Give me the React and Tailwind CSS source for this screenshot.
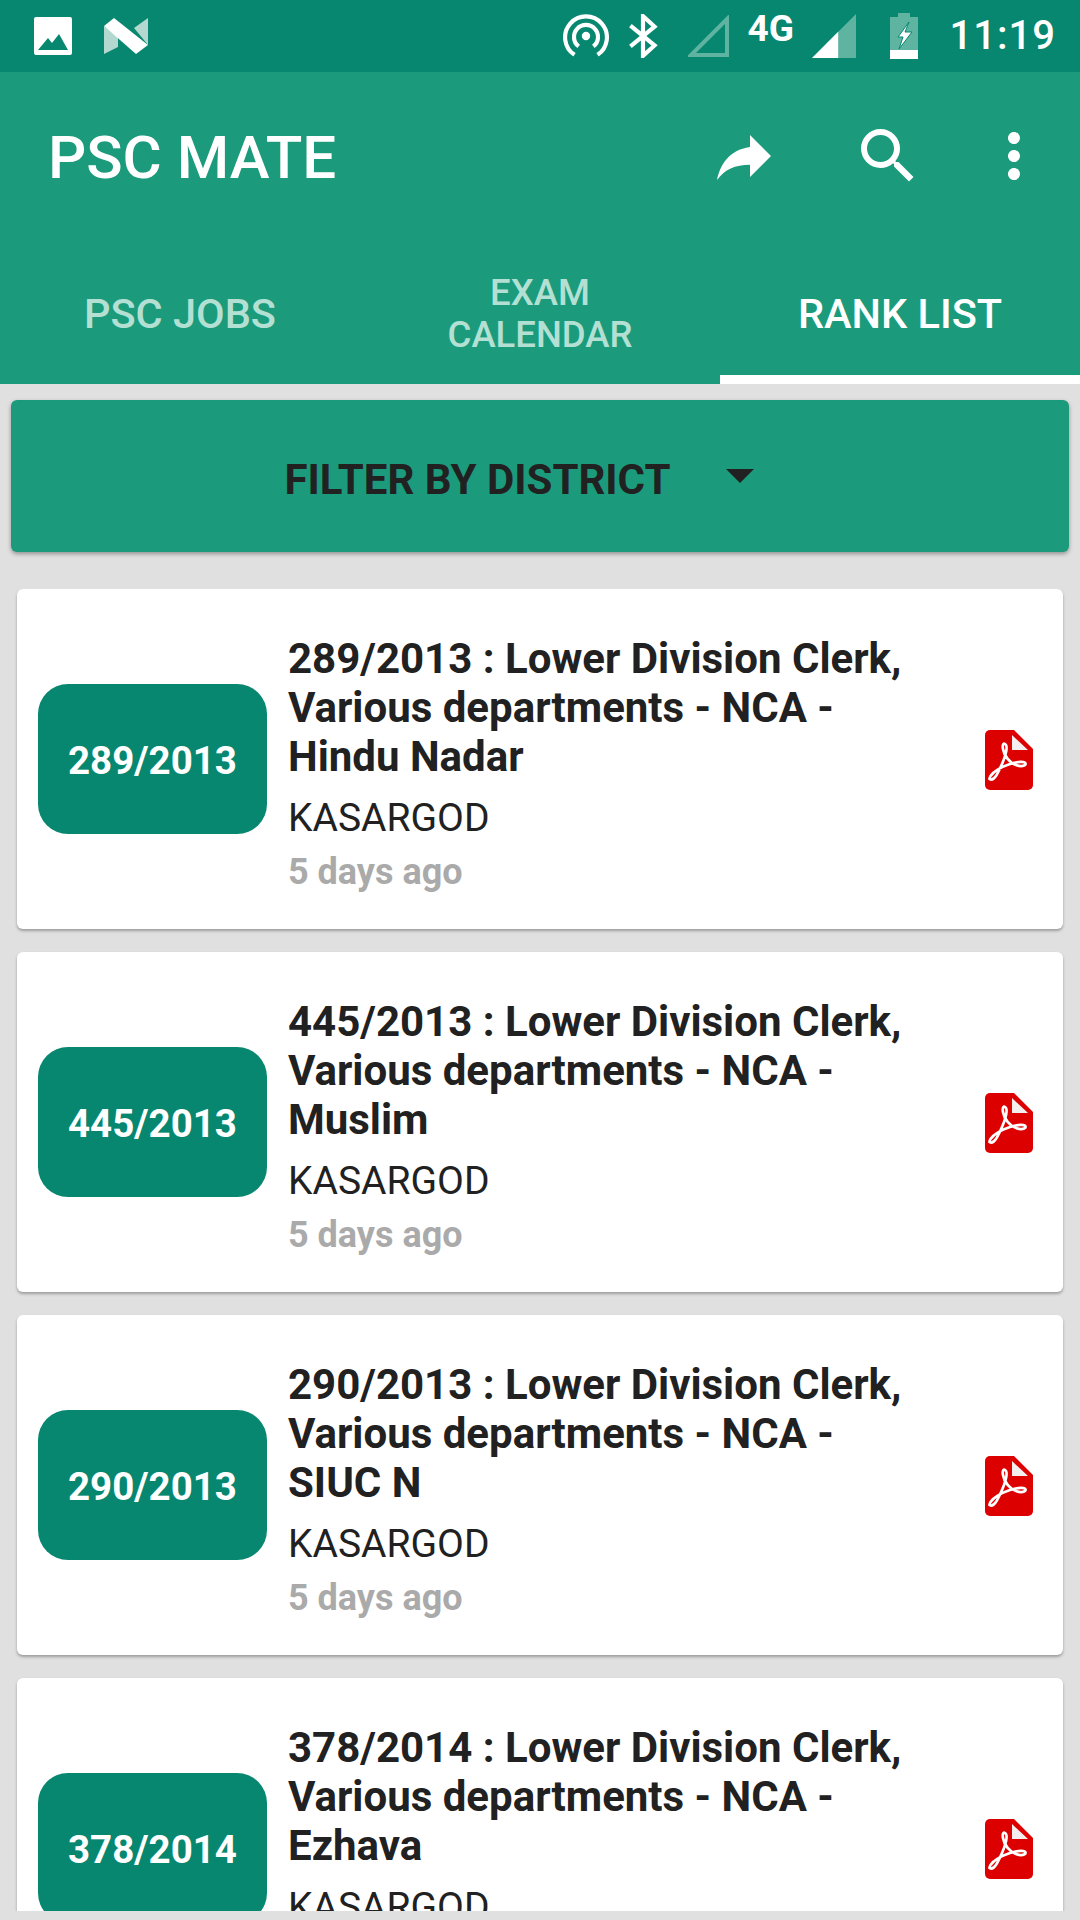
const FILAS = [
  { codigo: '289/2013', casta: 'Hindu Nadar' },
  { codigo: '445/2013', casta: 'Muslim' },
  { codigo: '290/2013', casta: 'SIUC N' },
  { codigo: '378/2014', casta: 'Ezhava' },
]

function PdfIcon() {
  return (
    <svg viewBox="0 0 48 60" className="mt-[2px] h-[60px] w-[48px] shrink-0">
      <path d="M5 0H29L48 19V55a5 5 0 0 1-5 5H5a5 5 0 0 1-5-5V5a5 5 0 0 1 5-5z" fill="#dd0000" />
      <path d="M27 5L43 20H27z" fill="#f4eeee" />
      <path
        d="M4.500 49C9 52 13 43 17 34C20 27 23 19 21 15C19 12 17 14 18 19C19 26 25 33 31 35C36 37 41 36 40.500 33.500C40 31 33 31.500 25 34C16 37 9 41 5.500 46C5 47 4.500 48 4.500 49z"
        fill="none"
        stroke="#fff"
        strokeWidth="2.7"
      />
    </svg>
  )
}

function StatusBar() {
  return (
    <div className="flex h-[72px] items-center bg-[#07876f] pl-[34px] pr-[24px] text-white">
      <svg viewBox="0 0 38 38" className="h-[38px] w-[38px]">
        <rect width="38" height="38" rx="2" fill="#fff" />
        <path d="M4 33L14 21L18 26L25 17L34 33z" fill="#07876f" />
      </svg>
      <svg viewBox="0 0 44 38" className="ml-[32px] h-[38px] w-[44px]">
        <path d="M0 9L14 20V30L0 37z" fill="#b2d8d0" />
        <path d="M30 11L44 1V28z" fill="#b2d8d0" />
        <path d="M0 9L10 1L44 28L32 37z" fill="#fff" />
      </svg>
      <div className="flex-1" />
      <svg viewBox="0 0 44 44" className="h-[46px] w-[46px]" fill="none" stroke="#fff" strokeWidth="4">
        <path d="M11 40A20 20 0 1 1 33 40" />
        <path d="M15 32A11.500 11.500 0 1 1 29 32" />
        <circle cx="22" cy="22" r="4" fill="#fff" stroke="none" />
      </svg>
      <svg viewBox="0 0 28 42" className="ml-[19px] h-[44px] w-[30px]" fill="none" stroke="#fff" strokeWidth="4">
        <path d="M2 11L25 30L14 40V2L25 12L2 31" />
      </svg>
      <svg viewBox="0 0 42 42" className="ml-[30px] h-[42px] w-[42px]" fill="none" stroke="#5fb3a1" strokeWidth="4">
        <path d="M39 4V40H3z" />
      </svg>
      <span className="mb-[16px] ml-[18px] w-[50px] text-[37px] leading-none font-bold">4G</span>
      <svg viewBox="0 0 42 42" className="ml-[14px] h-[44px] w-[44px]">
        <path d="M42 0V42H0z" fill="#5fb3a1" />
        <path d="M25 17V42H0z" fill="#fff" />
      </svg>
      <svg viewBox="0 0 28 46" className="ml-[34px] h-[46px] w-[28px]">
        <path d="M8 0H20V4H28V46H0V4H8z" fill="#5fb3a1" />
        <path d="M0 37H28V46H0z" fill="#fff" />
        <path d="M19 9L8 24H13L9 36L22 19H15z" fill="#fff" stroke="#07876f" strokeWidth="1" />
      </svg>
      <span className="ml-[32px] text-[40px] leading-none font-medium tracking-[1px]">11:19</span>
    </div>
  )
}

function Toolbar() {
  return (
    <div className="bg-[#1b9b7c]">
      <div className="flex h-[168px] items-center pl-[48px] pr-[30px] text-white">
        <h1 className="mt-[4px] flex-1 text-[60px] leading-none font-medium">PSC MATE</h1>
        <svg viewBox="0 0 24 24" className="h-[72px] w-[72px]" fill="#fff">
          <path d="M14 9V5l7 7-7 7v-4.100c-5 0-8.500 1.600-11 5.100 1-5 4-10 11-11z" />
        </svg>
        <svg viewBox="0 0 24 24" className="ml-[72px] h-[72px] w-[72px]" fill="#fff">
          <path d="M15.500 14h-.79l-.28-.27A6.470 6.470 0 0 0 16 9.500 6.500 6.500 0 1 0 9.500 16c1.610 0 3.090-.59 4.230-1.570l.27.28v.79l5 4.990L20.490 19l-4.990-5zm-6 0C7.010 14 5 11.990 5 9.500S7.010 5 9.500 5 14 7.010 14 9.500 11.990 14 9.500 14z" />
        </svg>
        <svg viewBox="0 0 24 24" className="ml-[54px] h-[72px] w-[72px]" fill="#fff">
          <path d="M12 8c1.100 0 2-.9 2-2s-.9-2-2-2-2 .9-2 2 .9 2 2 2zm0 2c-1.100 0-2 .9-2 2s.9 2 2 2 2-.9 2-2-.9-2-2-2zm0 6c-1.100 0-2 .9-2 2s.9 2 2 2 2-.9 2-2-.9-2-2-2z" />
        </svg>
      </div>
      <div className="grid h-[144px] grid-cols-3 text-center font-medium">
        <div className="flex items-center justify-center border-b-[9px] border-transparent pt-[12px] text-[41.500px] leading-[42px] text-[#b4e0d4]">PSC JOBS</div>
        <div className="flex items-center justify-center border-b-[9px] border-transparent pt-[12px] text-[36.500px] leading-[42px] text-[#b4e0d4]">
          EXAM
          <br />
          CALENDAR
        </div>
        <div className="flex items-center justify-center border-b-[9px] border-white pt-[12px] text-[41.500px] leading-[42px] text-white">RANK LIST</div>
      </div>
    </div>
  )
}

function RankCard({ codigo, casta }) {
  return (
    <div className="flex h-[340px] shrink-0 items-center rounded-[6px] bg-white pl-[21px] pr-[30px] shadow-[0_2px_3px_rgba(0,0,0,0.3)]">
      <div className="flex h-[150px] w-[229px] shrink-0 items-center justify-center rounded-[30px] bg-[#07876f] pt-[4px] text-[38.500px] font-bold text-white">{codigo}</div>
      <div className="ml-[21px] flex-1 pt-[12px] text-[#212121]">
        <p className="text-[42px] leading-[49px] font-bold">
          {codigo} : Lower Division Clerk,
          <br />
          Various departments - NCA -
          <br />
          {casta}
        </p>
        <p className="mt-[13px] text-[39px] leading-[48px]">KASARGOD</p>
        <p className="mt-[6px] text-[36px] leading-[48px] font-bold text-[#aaaaaa]">5 days ago</p>
      </div>
      <PdfIcon />
    </div>
  )
}

export default function App() {
  return (
    <div className="flex h-[1920px] w-[1080px] flex-col overflow-hidden bg-[#e0e0e0] font-['Roboto',sans-serif]">
      <StatusBar />
      <Toolbar />
      <div className="mx-[11px] mt-[16px] flex h-[152px] shrink-0 items-center justify-center rounded-[6px] bg-[#1b9b7c] pr-[42px] shadow-[0_2px_4px_rgba(0,0,0,0.35)]">
        <span className="pt-[6px] text-[42px] font-bold text-[#212121]">FILTER BY DISTRICT</span>
        <span className="ml-[55px] h-0 w-0 border-x-[14px] border-t-[14px] border-x-transparent border-t-[#212121]" />
      </div>
      <div className="mt-[37px] flex h-[1322px] shrink-0 flex-col gap-[23px] overflow-hidden px-[17px]">
        {FILAS.map((fila) => (
          <RankCard key={fila.codigo} codigo={fila.codigo} casta={fila.casta} />
        ))}
      </div>
    </div>
  )
}
